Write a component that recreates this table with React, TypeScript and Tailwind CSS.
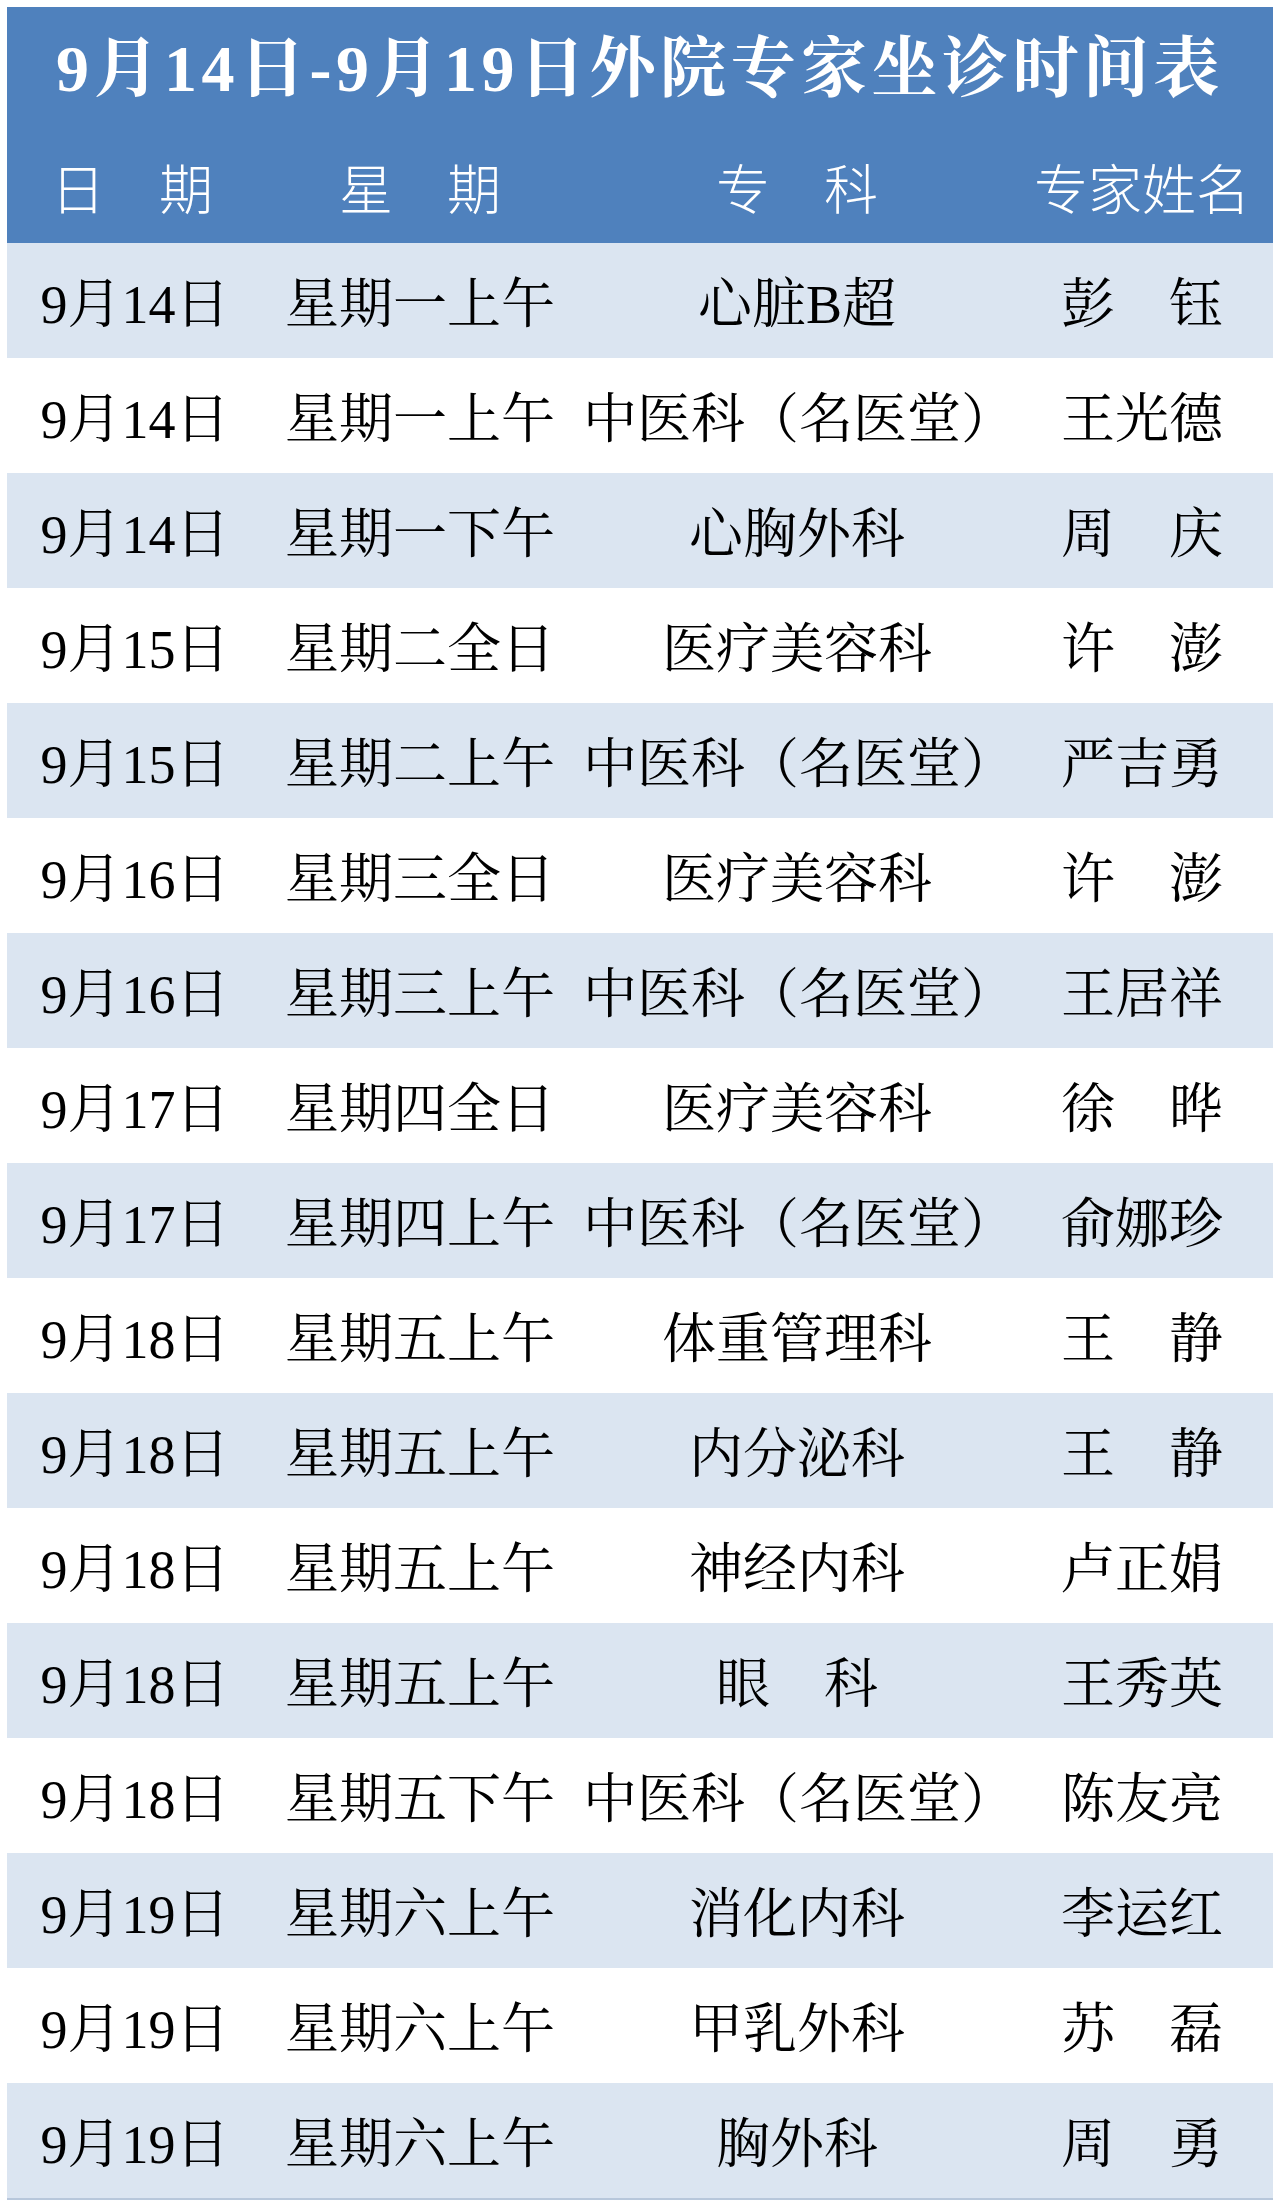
const rows = [
  ["9月14日", "星期一上午", "心脏B超", "彭　钰"],
  ["9月14日", "星期一上午", "中医科（名医堂）", "王光德"],
  ["9月14日", "星期一下午", "心胸外科", "周　庆"],
  ["9月15日", "星期二全日", "医疗美容科", "许　澎"],
  ["9月15日", "星期二上午", "中医科（名医堂）", "严吉勇"],
  ["9月16日", "星期三全日", "医疗美容科", "许　澎"],
  ["9月16日", "星期三上午", "中医科（名医堂）", "王居祥"],
  ["9月17日", "星期四全日", "医疗美容科", "徐　晔"],
  ["9月17日", "星期四上午", "中医科（名医堂）", "俞娜珍"],
  ["9月18日", "星期五上午", "体重管理科", "王　静"],
  ["9月18日", "星期五上午", "内分泌科", "王　静"],
  ["9月18日", "星期五上午", "神经内科", "卢正娟"],
  ["9月18日", "星期五上午", "眼　科", "王秀英"],
  ["9月18日", "星期五下午", "中医科（名医堂）", "陈友亮"],
  ["9月19日", "星期六上午", "消化内科", "李运红"],
  ["9月19日", "星期六上午", "甲乳外科", "苏　磊"],
  ["9月19日", "星期六上午", "胸外科", "周　勇"],
];

const serif =
  "font-['Liberation_Serif','Noto_Serif_CJK_SC','Noto_Sans_CJK_SC',serif]";

export default function App() {
  return (
    <div className="w-[1280px] h-[2205px] bg-white px-[7px] pt-[7px]">
      <div className="bg-[#4f81bd] text-white">
        <div
          className={`h-[124px] flex items-center justify-center text-[66px] font-bold tracking-[4.5px] leading-none ${serif}`}
        >
          9月14日-9月19日外院专家坐诊时间表
        </div>
        <div className="h-[112px] grid grid-cols-[250px_326px_428px_262px] items-center text-[54px] font-light leading-none font-['Noto_Sans_CJK_SC',sans-serif]">
          <div className="text-center">日　期</div>
          <div className="text-center">星　期</div>
          <div className="text-center">专　科</div>
          <div className="text-center">专家姓名</div>
        </div>
      </div>
      <div className="border-b-2 border-[#b7c7db]">
        {rows.map((r, i) => (
          <div
            key={i}
            className={`h-[115px] grid grid-cols-[250px_326px_428px_262px] items-center pt-[9px] text-[54px] leading-none text-black ${serif} ${
              i % 2 === 0 ? "bg-[#dbe5f1]" : "bg-white"
            }`}
          >
            <div className="text-center pl-[6px]">{r[0]}</div>
            <div className="text-center">{r[1]}</div>
            <div className="text-center">{r[2]}</div>
            <div className="text-center">{r[3]}</div>
          </div>
        ))}
      </div>
    </div>
  );
}
